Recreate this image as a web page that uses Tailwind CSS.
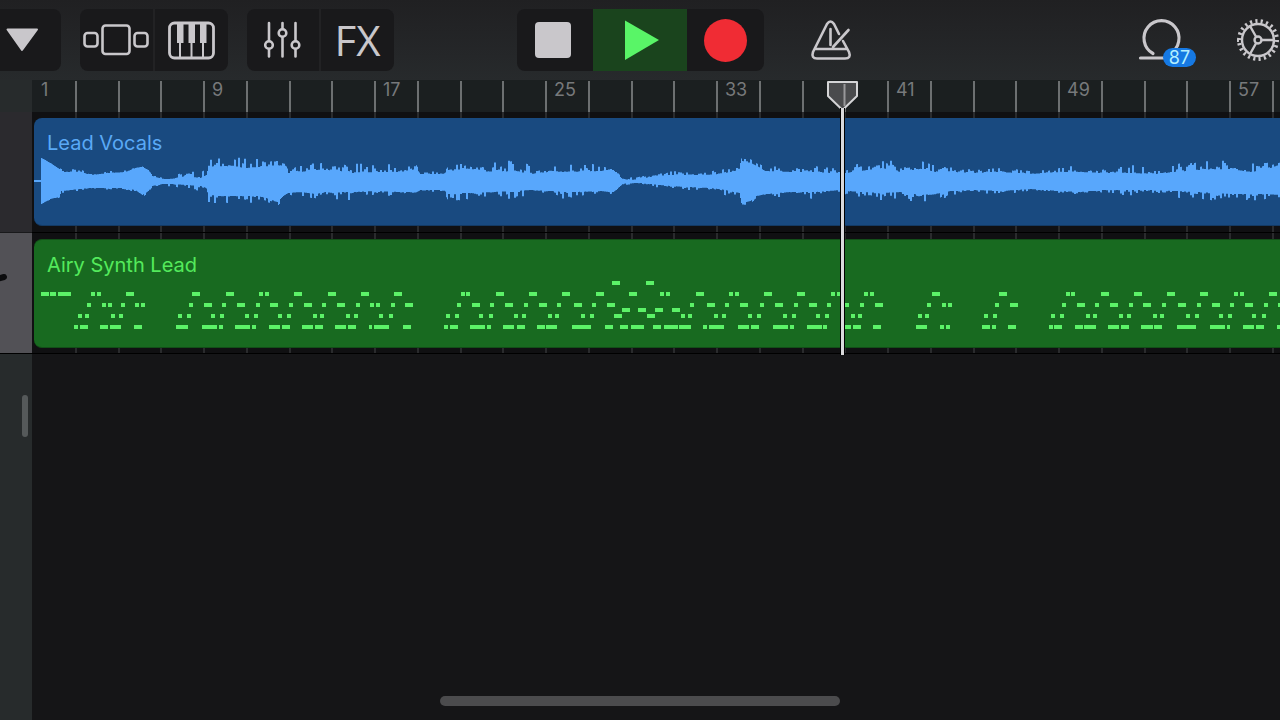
<!DOCTYPE html>
<html lang="en">
<head>
    <meta charset="UTF-8">
    <meta name="viewport" content="width=device-width, initial-scale=1.0">
    <title>Tracks</title>
    <script src="https://cdn.jsdelivr.net/npm/@tailwindcss/browser@4"></script>
</head>
<body class="bg-[#151517] font-[Inter,'Liberation_Sans',sans-serif] overflow-hidden">
    <div class="relative min-h-screen flex flex-col">

        <!-- Toolbar -->
        <header class="h-20 shrink-0 grid grid-cols-[1fr_auto_1fr] items-center bg-linear-to-b from-[#202022] to-[#272a2c] text-[#c9c7cb]">
            <div class="flex gap-[19px]">
                <button type="button" aria-label="View" class="w-[61px] h-[62px] bg-[#19191b] rounded-r-lg">
                    <svg class="w-[61px] h-[62px]" viewBox="0 9 61 62" fill="currentColor" stroke="currentColor" stroke-width="2" stroke-linejoin="round"><path d="M7.500 29.500H37L22 50Z"/></svg>
                </button>
                <div class="flex rounded-lg overflow-hidden bg-[#19191b]">
                    <button type="button" aria-label="Browser" class="w-[75px] h-[62px] border-r-2 border-[#222224]">
                        <svg class="w-[73px] h-[62px]" viewBox="80 9 73 62" fill="none" stroke="currentColor" stroke-width="2.600">
                            <rect x="102.500" y="25.500" width="27" height="28.500" rx="3"/>
                            <rect x="84.500" y="33" width="13" height="13.500" rx="3"/>
                            <rect x="134.500" y="33" width="13" height="13.500" rx="3"/>
                        </svg>
                    </button>
                    <button type="button" aria-label="Instrument" class="w-[73px] h-[62px]">
                        <svg class="w-[73px] h-[62px]" viewBox="155 9 73 62" fill="none" stroke="currentColor" stroke-width="2.800">
                            <rect x="169.500" y="23" width="44" height="35" rx="5"/>
                            <path d="M180 42V57M191.500 42V57M203 42V57" stroke-width="2"/>
                            <path d="M177 23H183.500V43H177ZM188.500 23H195V43H188.500ZM200 23H206.500V43H200Z" fill="currentColor" stroke="none"/>
                        </svg>
                    </button>
                </div>
                <div class="flex rounded-lg overflow-hidden bg-[#19191b]">
                    <button type="button" aria-label="Track controls" class="w-[74px] h-[62px] border-r-2 border-[#222224]">
                        <svg class="w-[72px] h-[62px]" viewBox="247 9 72 62" fill="none" stroke="currentColor" stroke-width="2.600" stroke-linecap="round">
                            <path d="M269 23V41M269 49V56.500M282.500 23V29M282.500 37V56.500M295.500 23V41M295.500 49V56.500"/>
                            <circle cx="269" cy="45" r="3.800"/>
                            <circle cx="282.500" cy="33" r="3.800"/>
                            <circle cx="295.500" cy="45" r="3.800"/>
                        </svg>
                    </button>
                    <button type="button" class="w-[73px] h-[62px] font-['Open_Sans'] text-[42px] leading-[62px]">FX</button>
                </div>
            </div>

            <div class="flex rounded-lg overflow-hidden bg-[#19191b]">
                <button type="button" aria-label="Stop" class="w-[76px] h-[62px] flex items-center justify-center pr-1">
                    <span class="size-9 rounded-sm bg-[#c9c7cb]"></span>
                </button>
                <button type="button" aria-label="Play" class="w-[94px] h-[62px] bg-[#1a441d]">
                    <svg class="w-[94px] h-[62px]" viewBox="593 9 94 62" fill="#59f567"><path d="M625 20.500L659 40L625 60Z"/></svg>
                </button>
                <button type="button" aria-label="Record" class="w-[77px] h-[62px] flex items-center justify-center">
                    <span class="size-[43px] rounded-full bg-[#f02c34]"></span>
                </button>
            </div>

            <div class="flex items-center pl-[45px]">
                <button type="button" aria-label="Metronome">
                    <svg class="w-11 h-[62px]" viewBox="809 9 44 62" fill="none" stroke="currentColor" stroke-width="2.600" stroke-linecap="round" stroke-linejoin="round">
                        <path d="M839 34L834 24Q830.500 19 827 24L813 52Q811 58.500 817 58.500H845Q851.500 58.500 849 52L843 41M816 49H846M830.500 29V45M848.500 30L833 47"/>
                    </svg>
                </button>
                <button type="button" aria-label="Loops" class="relative ml-auto">
                    <svg class="w-[60px] h-[62px]" viewBox="1137 9 60 62" fill="none" stroke="currentColor" stroke-width="3.200" stroke-linecap="round">
                        <path d="M1153 53.500A17.500 17.500 0 1 1 1170 53.500M1140.500 58H1168"/>
                    </svg>
                    <span class="absolute left-[26px] top-[39px] w-[33px] h-[19px] rounded-full bg-[#1679e3] text-[#b4efff] text-[18px] leading-[19px] text-center">87</span>
                </button>
                <button type="button" aria-label="Settings" class="ml-[39px]">
                    <svg class="w-11 h-[62px]" viewBox="1236 9 44 62" fill="none" stroke="currentColor" stroke-width="2.400">
                        <circle cx="1258" cy="40" r="19" stroke-width="4" pathLength="66" stroke-dasharray="1.200 1.800"/>
                        <circle cx="1258" cy="40" r="16"/>
                        <circle cx="1258" cy="40" r="3.500"/>
                        <path d="M1261.500 40H1274M1256.200 37L1250 26M1256.200 43L1250 54"/>
                    </svg>
                </button>
            </div>
        </header>

        <div class="flex grow">
            <!-- Track headers -->
            <aside class="w-8 shrink-0 bg-[#272b2c] flex flex-col">
                <div class="h-8"></div>
                <div class="h-[121px] bg-[#2b2a2e] border-b border-[#19191b]"></div>
                <div class="h-[121px] bg-[#525156] border-b border-black pt-10">
                    <svg class="w-8 h-10" viewBox="0 0 32 40" fill="none" stroke="#0c0c0e" stroke-width="6" stroke-linecap="round"><path d="M-3 6L4 4"/></svg>
                </div>
                <div class="w-[6px] h-[42px] mt-[41px] ml-auto mr-1 rounded-full bg-[#55595a]"></div>
            </aside>

            <!-- Timeline -->
            <main class="relative grow min-w-0 overflow-hidden">
                <div id="ruler" class="flex h-8 overflow-hidden bg-[#1b1f20] text-[#77797b] text-[18px] leading-5"></div>

                <section class="relative h-[121px] pt-[6px] pl-[2px] bg-[#101012] border-b border-black">
                    <div data-grid class="absolute inset-0 flex overflow-hidden"></div>
                    <div class="relative h-[108px] pt-[11px] overflow-hidden rounded-l-lg bg-[#194a80] border-b border-[#143a63]">
                        <h2 class="pl-[13px] text-[20px] leading-7 text-[#5aa9f6]">Lead Vocals</h2>
                        <svg class="w-full h-[60px]"><path id="wave" fill="#58a7fc"/></svg>
                    </div>
                </section>

                <section class="relative h-[121px] pt-[6px] pl-[2px] bg-[#101012] border-b border-black">
                    <div data-grid class="absolute inset-0 flex overflow-hidden"></div>
                    <div class="relative h-[109px] pt-[11px] overflow-hidden rounded-l-lg bg-[#186a20] border-y border-[#124f18]">
                        <h2 class="pl-[13px] text-[20px] leading-7 text-[#54ea5c]">Airy Synth Lead</h2>
                        <svg id="notes" class="w-full h-[60px]" fill="#5cf268"></svg>
                    </div>
                </section>

                <!-- Playhead -->
                <div class="absolute left-[794px] top-0 w-[33px] h-[275px] flex flex-col items-center">
                    <svg class="w-[33px] h-8 shrink-0" viewBox="0 0 33 32" fill="#4a4b4d" stroke="#d4d4d6" stroke-width="2" stroke-linejoin="round">
                        <path d="M2 2H31V16L16.500 30L2 16Z"/>
                        <path d="M18.500 4V26" stroke="#98989a"/>
                    </svg>
                    <div class="w-[5px] grow -mt-1 bg-[#d9d9db] border-x border-black"></div>
                </div>
            </main>
        </div>

        <div class="absolute bottom-[14px] left-1/2 -translate-x-1/2 w-[400px] h-[10px] rounded-full bg-[#4b4b4d]"></div>
    </div>

    <script>
        // Ruler: one block per 8 bars, four ticks in each
        const ruler = document.getElementById('ruler');
        const grids = document.querySelectorAll('[data-grid]');

        for (let bar = 1; bar <= 57; bar += 8) {
            const first = bar === 1 ? 'border-transparent' : 'border-[#6d7071]';
            ruler.innerHTML += `
                <div class="relative w-[171px] shrink-0 flex">
                    <span class="absolute left-[9px] top-0">${bar}</span>
                    <i class="flex-1 mt-px border-l-2 ${first}"></i>
                    <i class="flex-1 mt-px border-l-2 border-[#6d7071]"></i>
                    <i class="flex-1 mt-px border-l-2 border-[#6d7071]"></i>
                    <i class="flex-1 mt-px border-l-2 border-[#6d7071]"></i>
                </div>`;
            grids.forEach(grid => {
                grid.innerHTML += `
                    <div class="w-[171px] shrink-0 flex">
                        <i class="flex-1 border-l-2 ${bar === 1 ? 'border-transparent' : 'border-[#2a2b2d]'}"></i>
                        <i class="flex-1 border-l-2 border-[#2a2b2d]"></i>
                        <i class="flex-1 border-l-2 border-[#2a2b2d]"></i>
                        <i class="flex-1 border-l-2 border-[#2a2b2d]"></i>
                    </div>`;
            });
        }

        // x of a region's left edge, taken off the wave and note positions
        const regionX = 34;

        // Waveform envelope: x, height above the centre line, depth below it, spike size
        const centre = 24;
        const envelope = [
            [41,23,23,0],[50,18,18,1],[59,12,16,1],[61,9,10,3],[80,9,8,3],[90,6,7,2],[110,8,7,3],[125,9,7,3],[135,13,9,3],[142,14,14,3],
            [148,11,10,2],[152,5,5,2],[162,2,3,3],[172,2,3,3],[185,5,4,6],[200,3,5,7],[206,6,7,7],[208,14,14,10],[225,15,15,9],[245,13,15,10],
            [260,14,15,10],[277,16,21,7],[284,14,14,7],[288,8,12,4],[300,9,11,8],[315,11,13,8],[325,11,11,10],[340,10,11,11],[352,8,11,10],
            [375,9,10,9],[400,9,11,8],[416,12,11,4],[420,7,9,3],[443,7,9,2],[447,10,12,9],[470,12,12,10],[490,9,11,11],[515,10,10,11],
            [530,7,9,10],[550,9,10,10],[575,9,11,11],[600,10,10,6],[613,11,11,3],[622,2,3,1],[630,1,2,3],[640,2,2,3],[650,4,3,3],[670,6,5,4],
            [690,6,6,4],[710,6,7,5],[725,8,9,7],[739,11,12,3],[741,20,22,3],[750,18,20,5],[756,15,15,4],[765,10,13,5],[790,9,11,6],
            [815,9,11,9],[840,7,9,7],[860,10,11,8],[882,13,12,9],[900,9,11,10],[920,12,14,9],[935,9,13,9],[950,9,10,7],[975,8,9,4],
            [1000,9,10,4],[1030,7,8,4],[1060,9,10,5],[1080,9,11,7],[1100,8,9,3],[1130,8,9,8],[1155,7,9,8],[1175,9,10,8],[1200,11,11,11],
            [1230,12,13,11],[1250,9,13,10],[1265,11,13,7],[1281,17,14,4]
        ];

        function noise(n) {
            const v = Math.sin(n * 12.9898) * 43758.5453;
            return v - Math.floor(v);
        }

        let wave = `M0 ${centre - 1}H8V${centre + 1}H0Z`;
        for (let i = 0; i < envelope.length - 1; i++) {
            const [x0, up0, down0, spike0] = envelope[i];
            const [x1, up1, down1, spike1] = envelope[i + 1];
            for (let x = x0; x < x1; x++) {
                const t = (x - x0) / (x1 - x0);
                const step = x >> 1;
                const spike = spike0 + (spike1 - spike0) * t;
                const up = up0 + (up1 - up0) * t + spike * (noise(step) ** 3);
                const down = down0 + (down1 - down0) * t + spike * (noise(step + 5000) ** 4) * 0.8;
                wave += `M${x - regionX} ${(centre - up).toFixed(1)}h1V${(centre + down).toFixed(1)}h-1z`;
            }
        }
        document.getElementById('wave').setAttribute('d', wave);

        // Notes by row: [x, length], length 4 where it is left out
        const rows = [
            { y: 2, notes: [[612,8],[646,8]] },
            { y: 13, notes: [
                [41,8],[50,6],[58,13],[91],[97],[126,8],[192,8],[226,8],[259],[265],[294,8],[328,8],[361,8],[394,8],[461],[466],
                [496,8],[529,8],[562,8],[596,8],[629,8],[660],[666],[696,8],[729],[735],[764,8],[797,8],[831],[837],[864],[870],
                [932,8],[999,8],[1066],[1071],[1101,8],[1134,8],[1167,8],[1200,8],[1234],[1240],[1269,8]
            ] },
            { y: 24, notes: [
                [87],[102],[108],[121],[135],[141],[189],[204,8],[222],[237,8],[256],[270,8],[289],[304,8],[322],[337,8],[356],
                [370],[376],[391],[405,8],[457],[472,8],[490],[505,8],[524],[539,8],[557],[574,8],[592],[607,8],[690],[707,8],
                [725],[740,8],[760],[775,8],[794],[809,8],[827],[845],[860],[875,8],[927],[942],[948],[995],[1010,8],[1062],
                [1077,8],[1095],[1110,8],[1129],[1143,8],[1162],[1178,8],[1197],[1212,8],[1230],[1245,8],[1264],[1278]
            ] },
            { y: 29, notes: [[622,8],[638,8],[655,8],[672,8]] },
            { y: 35, notes: [
                [78],[85],[111],[119],[178],[187],[211],[220],[245],[254],[278],[287],[313],[320],[346],[354],[379],[389],[446],
                [455],[479],[489],[514],[522],[548],[555],[581],[590],[614,8],[647,8],[681],[688],[714],[722],[748],[757],[783],
                [792],[816],[825],[851],[858],[918],[925],[984],[993],[1051],[1060],[1086],[1093],[1119],[1127],[1153],[1160],
                [1186],[1195],[1219],[1228],[1252],[1262]
            ] },
            { y: 46, notes: [
                [74],[80,8],[100,8],[110,11],[134,8],[176,12],[202,15],[219],[235,15],[252],[269,11],[282,8],[302,11],[315,8],
                [335,11],[348,8],[369,3],[374,15],[403,8],[444],[450,8],[470,15],[487],[503,11],[517,8],[537,8],[546,11],
                [572,19],[605,8],[620,8],[631,13],[653,8],[664,14],[679,12],[703],[709,15],[738,11],[751,8],[773,15],[790],
                [807,15],[823],[842,9],[853,8],[873,8],[916,11],[940],[946],[982,8],[992],[1008,8],[1049],[1054,8],[1075,8],
                [1084,12],[1108,11],[1121,8],[1141,12],[1154,8],[1177,19],[1210,15],[1227,3],[1243,11],[1256,8],[1277]
            ] }
        ];

        document.getElementById('notes').innerHTML = rows.map(row =>
            row.notes.map(([x, length = 4]) =>
                `<rect x="${x - regionX}" y="${row.y}" width="${length}" height="4"/>`
            ).join('')
        ).join('');
    </script>
</body>
</html>
